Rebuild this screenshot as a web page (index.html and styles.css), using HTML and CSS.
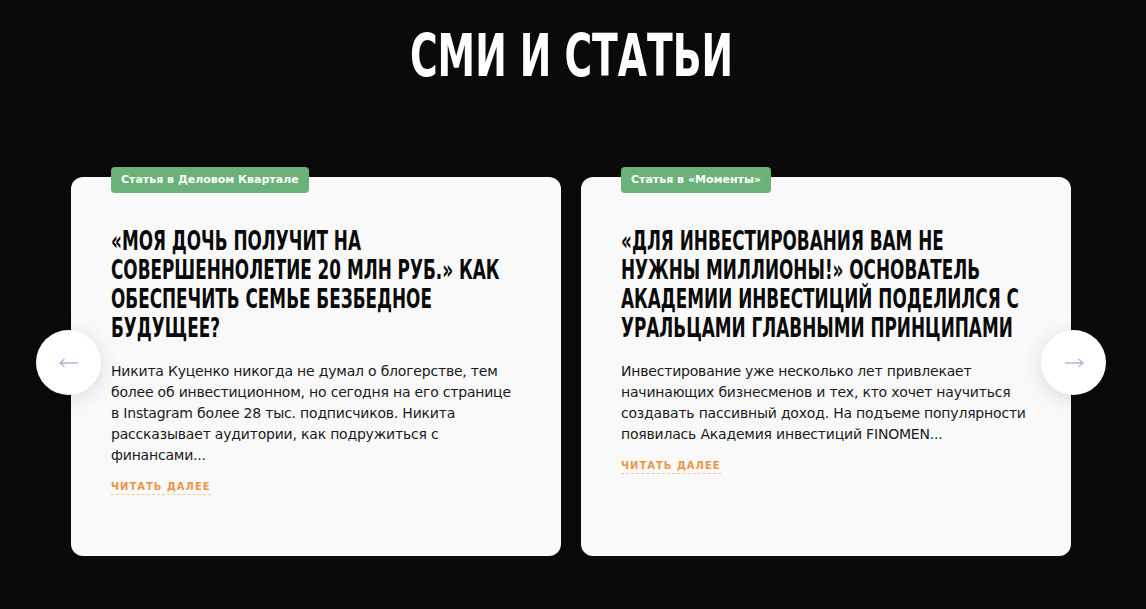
FILE: index.html
```html
<!DOCTYPE html>
<html lang="ru">
<head>
    <meta charset="UTF-8">
    <meta name="viewport" content="width=device-width, initial-scale=1.0">
    <title>СМИ и статьи</title>
    <link rel="stylesheet" href="styles.css">
</head>
<body>
    <section class="press">
        <h2 class="press-title"><span>СМИ И СТАТЬИ</span></h2>

        <div class="slider">
            <button class="slider-arrow prev" aria-label="Назад">
                <svg width="20" height="10" viewBox="0 0 20 10"><path d="M1 5H19M5.5 1L1 5L5.5 9"/></svg>
            </button>

            <div class="cards">
                <div class="card">
                    <span class="card-tag">Статья в Деловом Квартале</span>
                    <h3>«Моя дочь получит на совершеннолетие 20 млн руб.» Как обеспечить семье безбедное будущее?</h3>
                    <p>Никита Куценко никогда не думал о блогерстве, тем более об инвестиционном, но сегодня на его странице в Instagram более 28 тыс. подписчиков. Никита рассказывает аудитории, как подружиться с финансами...</p>
                    <a href="#" class="card-more">Читать далее</a>
                </div>

                <div class="card">
                    <span class="card-tag">Статья в «Моменты»</span>
                    <h3>«Для инвестирования вам не нужны миллионы!» Основатель Академии инвестиций поделился с уральцами главными принципами</h3>
                    <p>Инвестирование уже несколько лет привлекает начинающих бизнесменов и тех, кто хочет научиться создавать пассивный доход. На подъеме популярности появилась Академия инвестиций FINOMEN...</p>
                    <a href="#" class="card-more">Читать далее</a>
                </div>
            </div>

            <button class="slider-arrow next" aria-label="Вперёд">
                <svg width="20" height="10" viewBox="0 0 20 10"><path d="M1 5H19M14.5 1L19 5L14.5 9"/></svg>
            </button>
        </div>
    </section>
</body>
</html>
```

FILE: styles.css
```css
body {
    background-color: #0a0a0a;
    color: #fff;
    font-family: "DejaVu Sans", sans-serif;
    margin: 0;
    padding: 0;
}

.press {
    width: 1000px;
    margin: 0 auto;
    padding: 21px 0 53px;
    position: relative;
    left: -2px;
}

/* заголовки узкие: сжимаем condensed-шрифт по горизонтали */
.press-title {
    margin: 0;
    font-family: "DejaVu Sans Condensed", sans-serif;
    font-weight: 700;
    font-size: 59px;
    line-height: 70px;
    text-align: center;
    color: #fff;
}

.press-title span {
    display: inline-block;
    transform: scaleX(0.71);
}

/* Слайдер */
.slider {
    position: relative;
    margin-top: 86px;
}

.cards {
    display: grid;
    grid-template-columns: minmax(0, 1fr) minmax(0, 1fr);
    gap: 20px;
}

.card {
    position: relative;
    background-color: #f9f9f9;
    border-radius: 12px;
    padding: 50px 40px 40px;
    min-height: 379px;
    box-sizing: border-box;
    color: #111;
}

.card-tag {
    position: absolute;
    top: -10px;
    left: 40px;
    background-color: #6bb27a;
    color: #fff;
    font-size: 11px;
    font-weight: 700;
    padding: 6px 10px;
    border-radius: 4px;
    line-height: 14px;
}

.card h3 {
    width: 560px;
    margin: 0;
    font-family: "DejaVu Sans Condensed", sans-serif;
    font-weight: 700;
    font-size: 26px;
    line-height: 29px;
    text-transform: uppercase;
    color: #0a0a0a;
    transform: scaleX(0.72);
    transform-origin: left top;
}

.card p {
    margin: 18px 0 0;
    font-size: 14px;
    line-height: 21px;
    letter-spacing: -0.2px;
    color: #1a1a1a;
}

.card-more {
    display: inline-block;
    margin-top: 14px;
    color: #ec9444;
    font-size: 10px;
    font-weight: 700;
    letter-spacing: 1px;
    text-transform: uppercase;
    text-decoration: none;
    border-bottom: 1px dashed #f4c79c;
    line-height: 14px;
}

.slider-arrow {
    position: absolute;
    top: 153px;
    width: 65px;
    height: 65px;
    border: none;
    border-radius: 50%;
    background-color: #fff;
    box-shadow: 0 4px 20px rgba(0, 0, 0, 0.12);
    color: #b9b2da;
    cursor: pointer;
    z-index: 2;
    display: flex;
    align-items: center;
    justify-content: center;
    padding: 0;
}

.slider-arrow svg {
    fill: none;
    stroke: currentColor;
    stroke-width: 1.4;
}

.slider-arrow.prev {
    left: -35px;
}

.slider-arrow.next {
    right: -35px;
}
```
